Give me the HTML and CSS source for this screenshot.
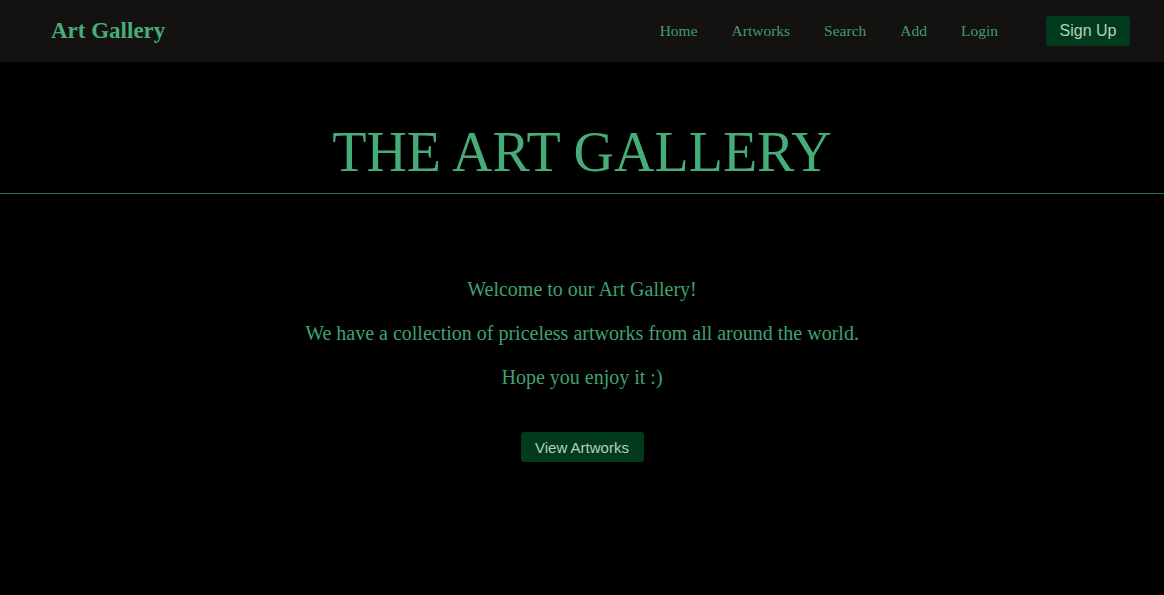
FILE: index.html
```html
<!DOCTYPE html>
<html>
<head>
<meta charset="utf-8">
<link rel="stylesheet" href="styles.css">
</head>
<body>
<header class="nav">
  <div class="logo">Art Gallery</div>
  <nav class="links">
    <a href="#">Home</a>
    <a href="#">Artworks</a>
    <a href="#">Search</a>
    <a href="#">Add</a>
    <a href="#">Login</a>
    <button class="signup">Sign Up</button>
  </nav>
</header>
<main class="main">
  <h1 class="title">THE ART GALLERY</h1>
  <div class="rule"></div>
  <section class="intro">
    <p>Welcome to our Art Gallery!</p>
    <p>We have a collection of priceless artworks from all around the world.</p>
    <p>Hope you enjoy it :)</p>
    <button class="view">View Artworks</button>
  </section>
</main>
</body>
</html>
```
FILE: styles.css
```css
html, body {
  margin: 0;
  padding: 0;
  background: #000;
  font-family: "Liberation Serif", "Times New Roman", serif;
}
.nav {
  height: 62px;
  background: #141111;
  display: flex;
  align-items: center;
  justify-content: space-between;
  padding: 0 34px 0 51px;
}
.logo {
  color: #47ad78;
  font-weight: bold;
  font-size: 23px;
}
.links {
  display: flex;
  align-items: center;
}
.links a {
  color: #3f9e6b;
  text-decoration: none;
  font-size: 15.5px;
  margin-right: 34px;
}
.links a:last-of-type {
  margin-right: 48px;
}
.signup {
  background: #023a1d;
  color: #b5cfbf;
  border: none;
  border-radius: 3px;
  font-family: "Liberation Sans", Arial, sans-serif;
  font-size: 16px;
  width: 84px;
  height: 30px;
  padding: 0;
}
.main {
  display: flex;
  flex-direction: column;
  align-items: center;
}
.title {
  color: #47ad78;
  font-weight: normal;
  font-size: 56px;
  margin: 58px 0 9px;
  line-height: 64px;
}
.rule {
  width: 100%;
  height: 1px;
  background: #2f7049;
}
.intro {
  display: flex;
  flex-direction: column;
  align-items: center;
  margin-top: 83px;
}
.intro p {
  color: #3fa270;
  font-size: 20px;
  margin: 0 0 20px;
  line-height: 24px;
}
.view {
  margin-top: 23px;
  background: #023a1d;
  color: #b5cfbf;
  border: none;
  border-radius: 3px;
  font-family: "Liberation Sans", Arial, sans-serif;
  font-size: 15px;
  width: 123px;
  height: 30px;
  padding: 0;
}
```
